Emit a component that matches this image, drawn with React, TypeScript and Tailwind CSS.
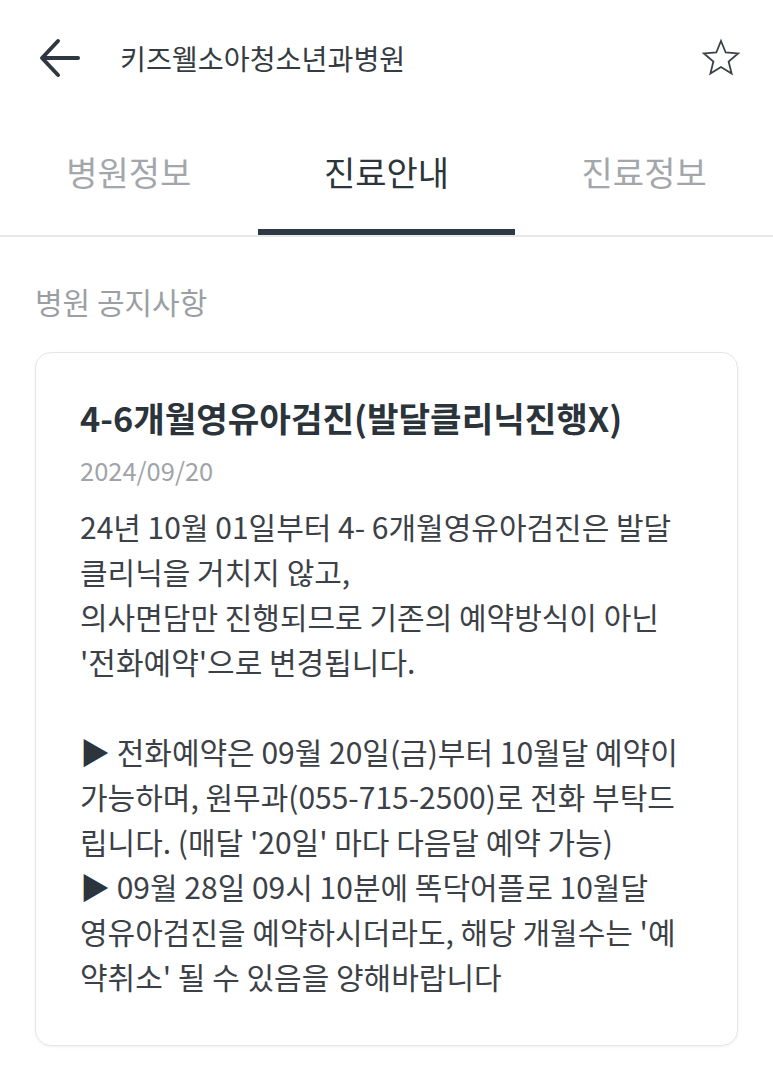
import React from 'react';

const FONT = "font-['Noto_Sans_CJK_KR','Noto_Sans',sans-serif]";

const tabs = ['병원정보', '진료안내', '진료정보'];

const bodyLines: (string | null)[] = [
    '24년 10월 01일부터 4- 6개월영유아검진은 발달',
    '클리닉을 거치지 않고,',
    '의사면담만 진행되므로 기존의 예약방식이 아닌',
    "'전화예약'으로 변경됩니다.",
    null,
    '▶ 전화예약은 09월 20일(금)부터 10월달 예약이',
    '가능하며, 원무과(055-715-2500)로 전화 부탁드',
    "립니다. (매달 '20일' 마다 다음달 예약 가능)",
    '▶ 09월 28일 09시 10분에 똑닥어플로 10월달',
    "영유아검진을 예약하시더라도, 해당 개월수는 '예",
    "약취소' 될 수 있음을 양해바랍니다",
];

const BackArrow = () => (
    <svg width="42" height="40" viewBox="0 0 42 40" fill="none" stroke="#2f3740" strokeWidth="4" strokeLinecap="round" strokeLinejoin="round">
        <path d="M39 20H4" />
        <path d="M19 3L3 20l16 17" />
    </svg>
);

const StarIcon = () => (
    <svg width="40" height="40" viewBox="0 0 40 40" fill="none" stroke="#3a4148" strokeWidth="1.8" strokeLinejoin="miter">
        <polygon points="20,3 24.7,14.5 37.1,15.4 27.6,23.5 30.6,35.6 20,29 9.4,35.6 12.4,23.5 2.9,15.4 15.3,14.5" />
    </svg>
);

export default function App() {
    return (
        <div className={`w-[773px] min-h-[1065px] bg-white ${FONT}`}>
            {/* Header */}
            <div className="h-[116px] flex items-center pl-[39px] pr-[32px]">
                <BackArrow />
                <span className="ml-[39px] text-[28.2px] text-[#343b42]">키즈웰소아청소년과병원</span>
                <div className="ml-auto">
                    <StarIcon />
                </div>
            </div>

            {/* Tabs */}
            <div className="grid grid-cols-3 border-b-2 border-[#e6e8ea]">
                {tabs.map((t, i) => (
                    <div key={t} className="flex flex-col items-center">
                        <div className={`h-[113px] flex items-center pb-[2px] text-[34px] ${i === 1 ? 'text-[#2c343c]' : 'text-[#a3a7ab]'}`}>
                            {t}
                        </div>
                        <div className={`w-full h-[6px] ${i === 1 ? 'bg-[#2f3943]' : 'bg-transparent'}`} />
                    </div>
                ))}
            </div>

            {/* Notice */}
            <div className="px-[35px] pt-[44px]">
                <div className="text-[30px] text-[#9b9fa4] leading-[40px]">병원 공지사항</div>
                <div className="mt-[31px] border border-[#e3e5e8] rounded-[16px] shadow-[0_1px_3px_rgba(0,0,0,0.06)] pl-[44px] pr-[24px] pt-[42px] pb-[46px]">
                    <div className="text-[34.3px] font-bold text-[#2b333b] leading-[44px]">4-6개월영유아검진(발달클리닉진행X)</div>
                    <div className="mt-[14px] text-[25.5px] text-[#a0a4a8] leading-[34px]">2024/09/20</div>
                    <div className="mt-[17px] text-[30px] text-[#3b4147] leading-[45px]">
                        {bodyLines.map((l, i) =>
                            l === null ? (
                                <div key={i} className="h-[45px]" />
                            ) : (
                                <div key={i} className="whitespace-nowrap">
                                    {l.startsWith('▶') ? (
                                        <>
                                            <span className="text-[#2c343c]">▶</span>
                                            {l.slice(1)}
                                        </>
                                    ) : (
                                        l
                                    )}
                                </div>
                            )
                        )}
                    </div>
                </div>
            </div>
        </div>
    );
}
